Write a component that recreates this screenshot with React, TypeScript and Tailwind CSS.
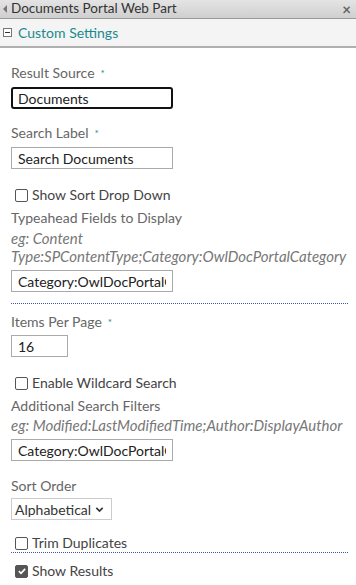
import { useState } from 'react'

function Req() {
  return <span className="ml-[6px] align-top text-[10px] text-[#1b8a8e]">*</span>
}

function Label({ children, req }: { children: React.ReactNode; req?: boolean }) {
  return (
    <div className="text-[14px] leading-[18px] text-[#666]">
      {children}
      {req && <Req />}
    </div>
  )
}

function Check({ label, checked }: { label: string; checked?: boolean }) {
  const [on, setOn] = useState(!!checked)
  return (
    <label className="flex items-center gap-[4px] pl-[4px] text-[14px] leading-[18px] text-[#444]">
      <span
        onClick={() => setOn(!on)}
        className={`flex h-[13px] w-[13px] items-center justify-center rounded-[2px] border ${
          on ? 'border-[#555] bg-[#555]' : 'border-[#555] bg-white'
        }`}
      >
        {on && (
          <svg viewBox="0 0 12 12" className="h-[10px] w-[10px]">
            <path d="M2.2 6.2 4.8 8.8 9.8 3.4" fill="none" stroke="#fff" strokeWidth="2" />
          </svg>
        )}
      </span>
      {label}
    </label>
  )
}

function Dots() {
  return <div className="mr-[8px] border-b border-dotted border-[#3a55b4]" />
}

const field = 'h-[22px] border border-[#aaa] px-[6px] text-[14px] text-[#222] outline-none'

export default function App() {
  return (
    <div
      className="h-[585px] w-[356px] overflow-hidden bg-white"
      style={{ fontFamily: 'Lato, "Noto Sans", sans-serif' }}
    >
      {/* title bar */}
      <div className="flex h-[19px] items-center border-b border-[#9a9a9a] bg-gradient-to-b from-[#e4e4e4] to-[#cfcfcf] pr-[5px] text-[13.5px] text-[#333]">
        <span className="ml-[3px] mr-[4px] h-0 w-0 border-y-[4px] border-r-[4px] border-y-transparent border-r-[#777]" />
        <span className="flex-1 leading-none">Documents Portal Web Part</span>
        <span className="text-[15px] font-bold leading-none text-[#666]">×</span>
      </div>

      {/* section header */}
      <div className="flex h-[29px] items-center border-b-2 border-[#b0b0b0] bg-[#f4f4f4] pl-[3px] text-[14px] text-[#1b8a8e]">
        <span className="mr-[6px] flex h-[9px] w-[9px] items-center justify-center border border-[#777] bg-white">
          <span className="h-px w-[5px] bg-[#333]" />
        </span>
        Custom Settings
      </div>

      <div className="flex flex-col pl-[11px] pt-[16px]">
        <Label req>Result Source</Label>
        <input
          defaultValue="Documents"
          className="mt-[5px] h-[22px] w-[162px] rounded-[3px] border-2 border-[#111] px-[5px] text-[14px] text-[#222] outline-none"
        />

        <div className="mt-[15px]">
          <Label req>Search Label</Label>
        </div>
        <input defaultValue="Search Documents" className={`mt-[5px] w-[162px] ${field}`} />

        <div className="mt-[17px]">
          <Check label="Show Sort Drop Down" />
        </div>
        <div className="mt-[5px]">
          <Label>Typeahead Fields to Display</Label>
        </div>
        <div className="mt-[2px] text-[15px] italic leading-[18px] text-[#777]">
          eg: Content
          <br />
          Type:SPContentType;Category:OwlDocPortalCategory
        </div>
        <input defaultValue="Category:OwlDocPortalCategory" className={`mt-[5px] w-[162px] ${field}`} />

        <div className="mt-[11px]">
          <Dots />
        </div>

        <div className="mt-[9px]">
          <Label req>Items Per Page</Label>
        </div>
        <input defaultValue="16" className={`mt-[4px] w-[57px] ${field}`} />

        <div className="mt-[17px]">
          <Check label="Enable Wildcard Search" />
        </div>
        <div className="mt-[5px]">
          <Label>Additional Search Filters</Label>
        </div>
        <div className="mt-[1px] whitespace-nowrap text-[15px] italic leading-[18px] text-[#777]">
          eg: Modified:LastModifiedTime;Author:DisplayAuthor
        </div>
        <input defaultValue="Category:OwlDocPortalCategory" className={`mt-[5px] w-[162px] ${field}`} />

        <div className="mt-[16px]">
          <Label>Sort Order</Label>
        </div>
        <div className="mt-[3px] flex h-[22px] w-[101px] items-center border border-[#ccc] pl-[3px] text-[14px] text-[#333]">
          Alphabetical
          <svg viewBox="0 0 10 10" className="ml-[4px] h-[9px] w-[9px]">
            <path d="M1.5 3.2 5 6.7 8.5 3.2" fill="none" stroke="#333" strokeWidth="1.8" />
          </svg>
        </div>

        <div className="mt-[14px]">
          <Check label="Trim Duplicates" />
        </div>
        <Dots />
        <div className="mt-[9px]">
          <Check label="Show Results" checked />
        </div>
      </div>
    </div>
  )
}
